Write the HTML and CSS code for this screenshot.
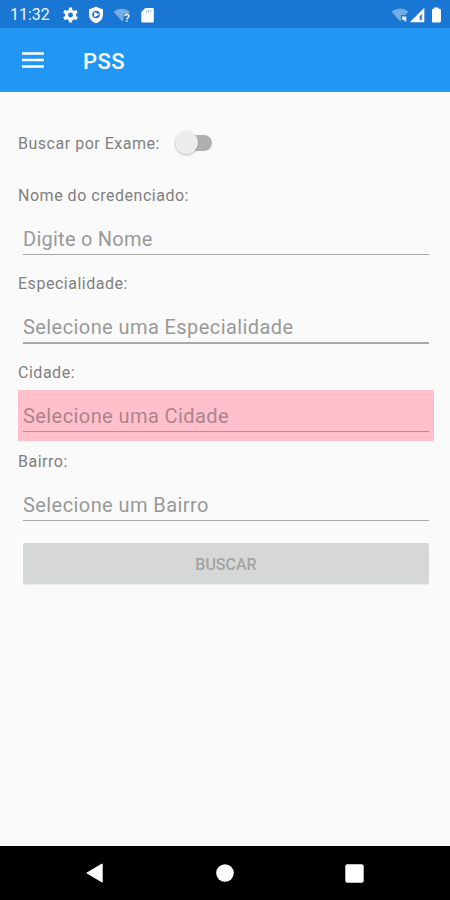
FILE: index.html
```html
<!DOCTYPE html>
<html lang="pt-BR">
<head>
<meta charset="utf-8">
<title>PSS</title>
<link rel="stylesheet" href="styles.css">
</head>
<body>
<div class="status">
  <span class="clock">11:32</span>
  <svg class="status-left" width="92" height="18" viewBox="0 0 92 18" fill="#fff">
    <g transform="translate(8.5 9)">
      <circle r="4" fill="none" stroke="#fff" stroke-width="3.1"/>
      <g stroke="#fff" stroke-width="3.3"><path d="M0-7.5V-4M0 4V7.5M-6.5-3.75L-3.5-2M3.5 2L6.5 3.75M-6.5 3.75L-3.5 2M3.5-2L6.5-3.75"/></g>
    </g>
    <path d="M34 .8L41 3.4V8.5C41 13 38 16 34 17.2C30 16 27 13 27 8.5V3.4Z"/>
    <circle cx="34" cy="8.5" r="3.8" fill="#1976d2"/><path d="M32.2 5.8L37.2 8.5L32.2 11.2Z"/>
    <path d="M51.5 5.5Q59.5 0 68 5.5L66 8H61.5V14.5L60 15.5Z" opacity=".4"/>
    <path d="M62.8 10.3Q62.8 8.5 64.8 8.5Q66.8 8.5 66.8 10.2Q66.8 11.2 65.6 12Q64.9 12.5 64.9 13.4M64.9 14.5V16" fill="none" stroke="#fff" stroke-width="1.4"/>
    <path d="M83.3 2H90.5Q91.8 2 91.8 3.3V15.2Q91.8 16.5 90.5 16.5H80.6Q79.3 16.5 79.3 15.2V6Z"/><path d="M84.3 4.3V6.5M86.5 4.3V6.5M88.7 4.3V6.5" stroke="#1976d2" stroke-width=".8" opacity=".6"/>
  </svg>
  <svg class="status-right" width="52" height="18" viewBox="0 0 52 18" fill="#fff">
    <path d="M1.5 5.5Q10 -.5 18.5 5.5L15.5 9H11V14.2L10 15.3Z" opacity=".4"/>
    <path d="M12 10.5H16.3V15.5H14.5V13.8H12Z" opacity=".9"/>
    <path d="M34.3 1.8V16.3H19.8Z"/><path d="M32.2 7.5V14.2H29.6V10.2Z" fill="#1976d2" opacity=".8"/>
    <path d="M44 2.8V1.5H48.5V2.8H49.6Q51 2.8 51 4.2V15.2Q51 16.5 49.6 16.5H43.4Q42 16.5 42 15.2V4.2Q42 2.8 43.4 2.8Z"/>
  </svg>
</div>
<header class="appbar">
  <svg class="menu" width="22" height="16" viewBox="0 0 22 16"><path d="M0 1.5H22M0 8H22M0 14.5H22" stroke="#fff" stroke-width="2.4"/></svg>
  <h1 class="title">PSS</h1>
</header>
<main class="form">
  <div class="switch-row"><span class="label">Buscar por Exame:</span><span class="switch"><span class="thumb"></span></span></div>
  <label class="label">Nome do credenciado:</label>
  <div class="field"><span class="hint hint-name">Digite o Nome</span></div>
  <label class="label">Especialidade:</label>
  <div class="field"><span class="hint">Selecione uma Especialidade</span></div>
  <label class="label">Cidade:</label>
  <div class="field invalid"><span class="hint">Selecione uma Cidade</span></div>
  <label class="label">Bairro:</label>
  <div class="field"><span class="hint">Selecione um Bairro</span></div>
  <button class="search" disabled>BUSCAR</button>
</main>
<nav class="navbar">
  <svg width="18" height="20" viewBox="0 0 18 20"><path d="M1.2 10L16 1.3V18.7Z" fill="#fff" stroke="#fff" stroke-width="1.4" stroke-linejoin="round"/></svg>
  <svg width="18" height="18" viewBox="0 0 18 18"><circle cx="9" cy="9" r="8.8" fill="#fff"/></svg>
  <svg width="19" height="19" viewBox="0 0 19 19"><rect x=".3" y=".3" width="18.4" height="18.4" rx="2" fill="#fff"/></svg>
</nav>
</body>
</html>
```
FILE: styles.css
```css
* { box-sizing: border-box; }
body {
  margin: 0;
  height: 900px;
  display: flex;
  flex-direction: column;
  overflow: hidden;
  background: #fafafa;
  font-family: Roboto, "Liberation Sans", sans-serif;
}
.status {
  height: 28px;
  flex: none;
  display: flex;
  align-items: center;
  padding: 1px 8px 0 10px;
  background: #1976d2;
}
.clock { width: 52px; font-size: 16px; font-weight: 400; line-height: 18px; color: #f2f7fd; }
.status-right { margin-left: auto; }
.appbar {
  height: 64px;
  flex: none;
  display: flex;
  align-items: center;
  padding: 0 22px;
  background: #2196f3;
  border-bottom: 1px solid #3c9be6;
}
.menu { margin-right: 39px; }
.title { margin: 4px 0 0; font-size: 22px; line-height: 28px; font-weight: 500; letter-spacing: .5px; color: #fff; }
.form { flex: 1; display: flex; flex-direction: column; padding: 37px 16px 0 18px; }
.switch-row { display: flex; align-items: center; height: 28px; margin-bottom: 26.6px; }
.label { display: block; height: 22px; margin-bottom: 7px; font-size: 16px; line-height: 23px; letter-spacing: .52px; color: #808080; white-space: nowrap; }
.switch-row .label { width: 157px; margin: 0; line-height: 24px; }
.switch { position: relative; width: 37px; height: 16px; border-radius: 8px; background: #b0b0b0; }
.thumb {
  position: absolute;
  left: 0;
  top: -4px;
  width: 23px;
  height: 23px;
  border-radius: 50%;
  background: #ececec;
  box-shadow: 0 1px 2px rgba(0, 0, 0, .25);
}
.field { height: 51px; margin-bottom: 8.7px; padding: 10px 5px 0; display: flex; flex-direction: column; color: #999; }
.field::after { content: ""; height: 1.5px; margin-top: 5px; background: #a8a8a8; }
.hint { height: 26px; font-size: 20px; line-height: 32px; letter-spacing: .42px; white-space: nowrap; }
.hint-name { letter-spacing: .25px; }
.invalid { background: #ffc0cb; color: #ac858b; }
.invalid::after { background: #bb8c94; }
.search {
  height: 41px;
  margin: 5px 5px 0;
  padding: 2px 0 0;
  border: 0;
  border-radius: 2px;
  background: #d6d8d7;
  color: #a2a4a3;
  font: 500 16px/22px Roboto, "Liberation Sans", sans-serif;
  box-shadow: 0 1px 1px rgba(0, 0, 0, .06);
}
.navbar {
  height: 54px;
  flex: none;
  display: flex;
  justify-content: space-between;
  align-items: center;
  padding: 0 86px;
  background: #000;
}
```
